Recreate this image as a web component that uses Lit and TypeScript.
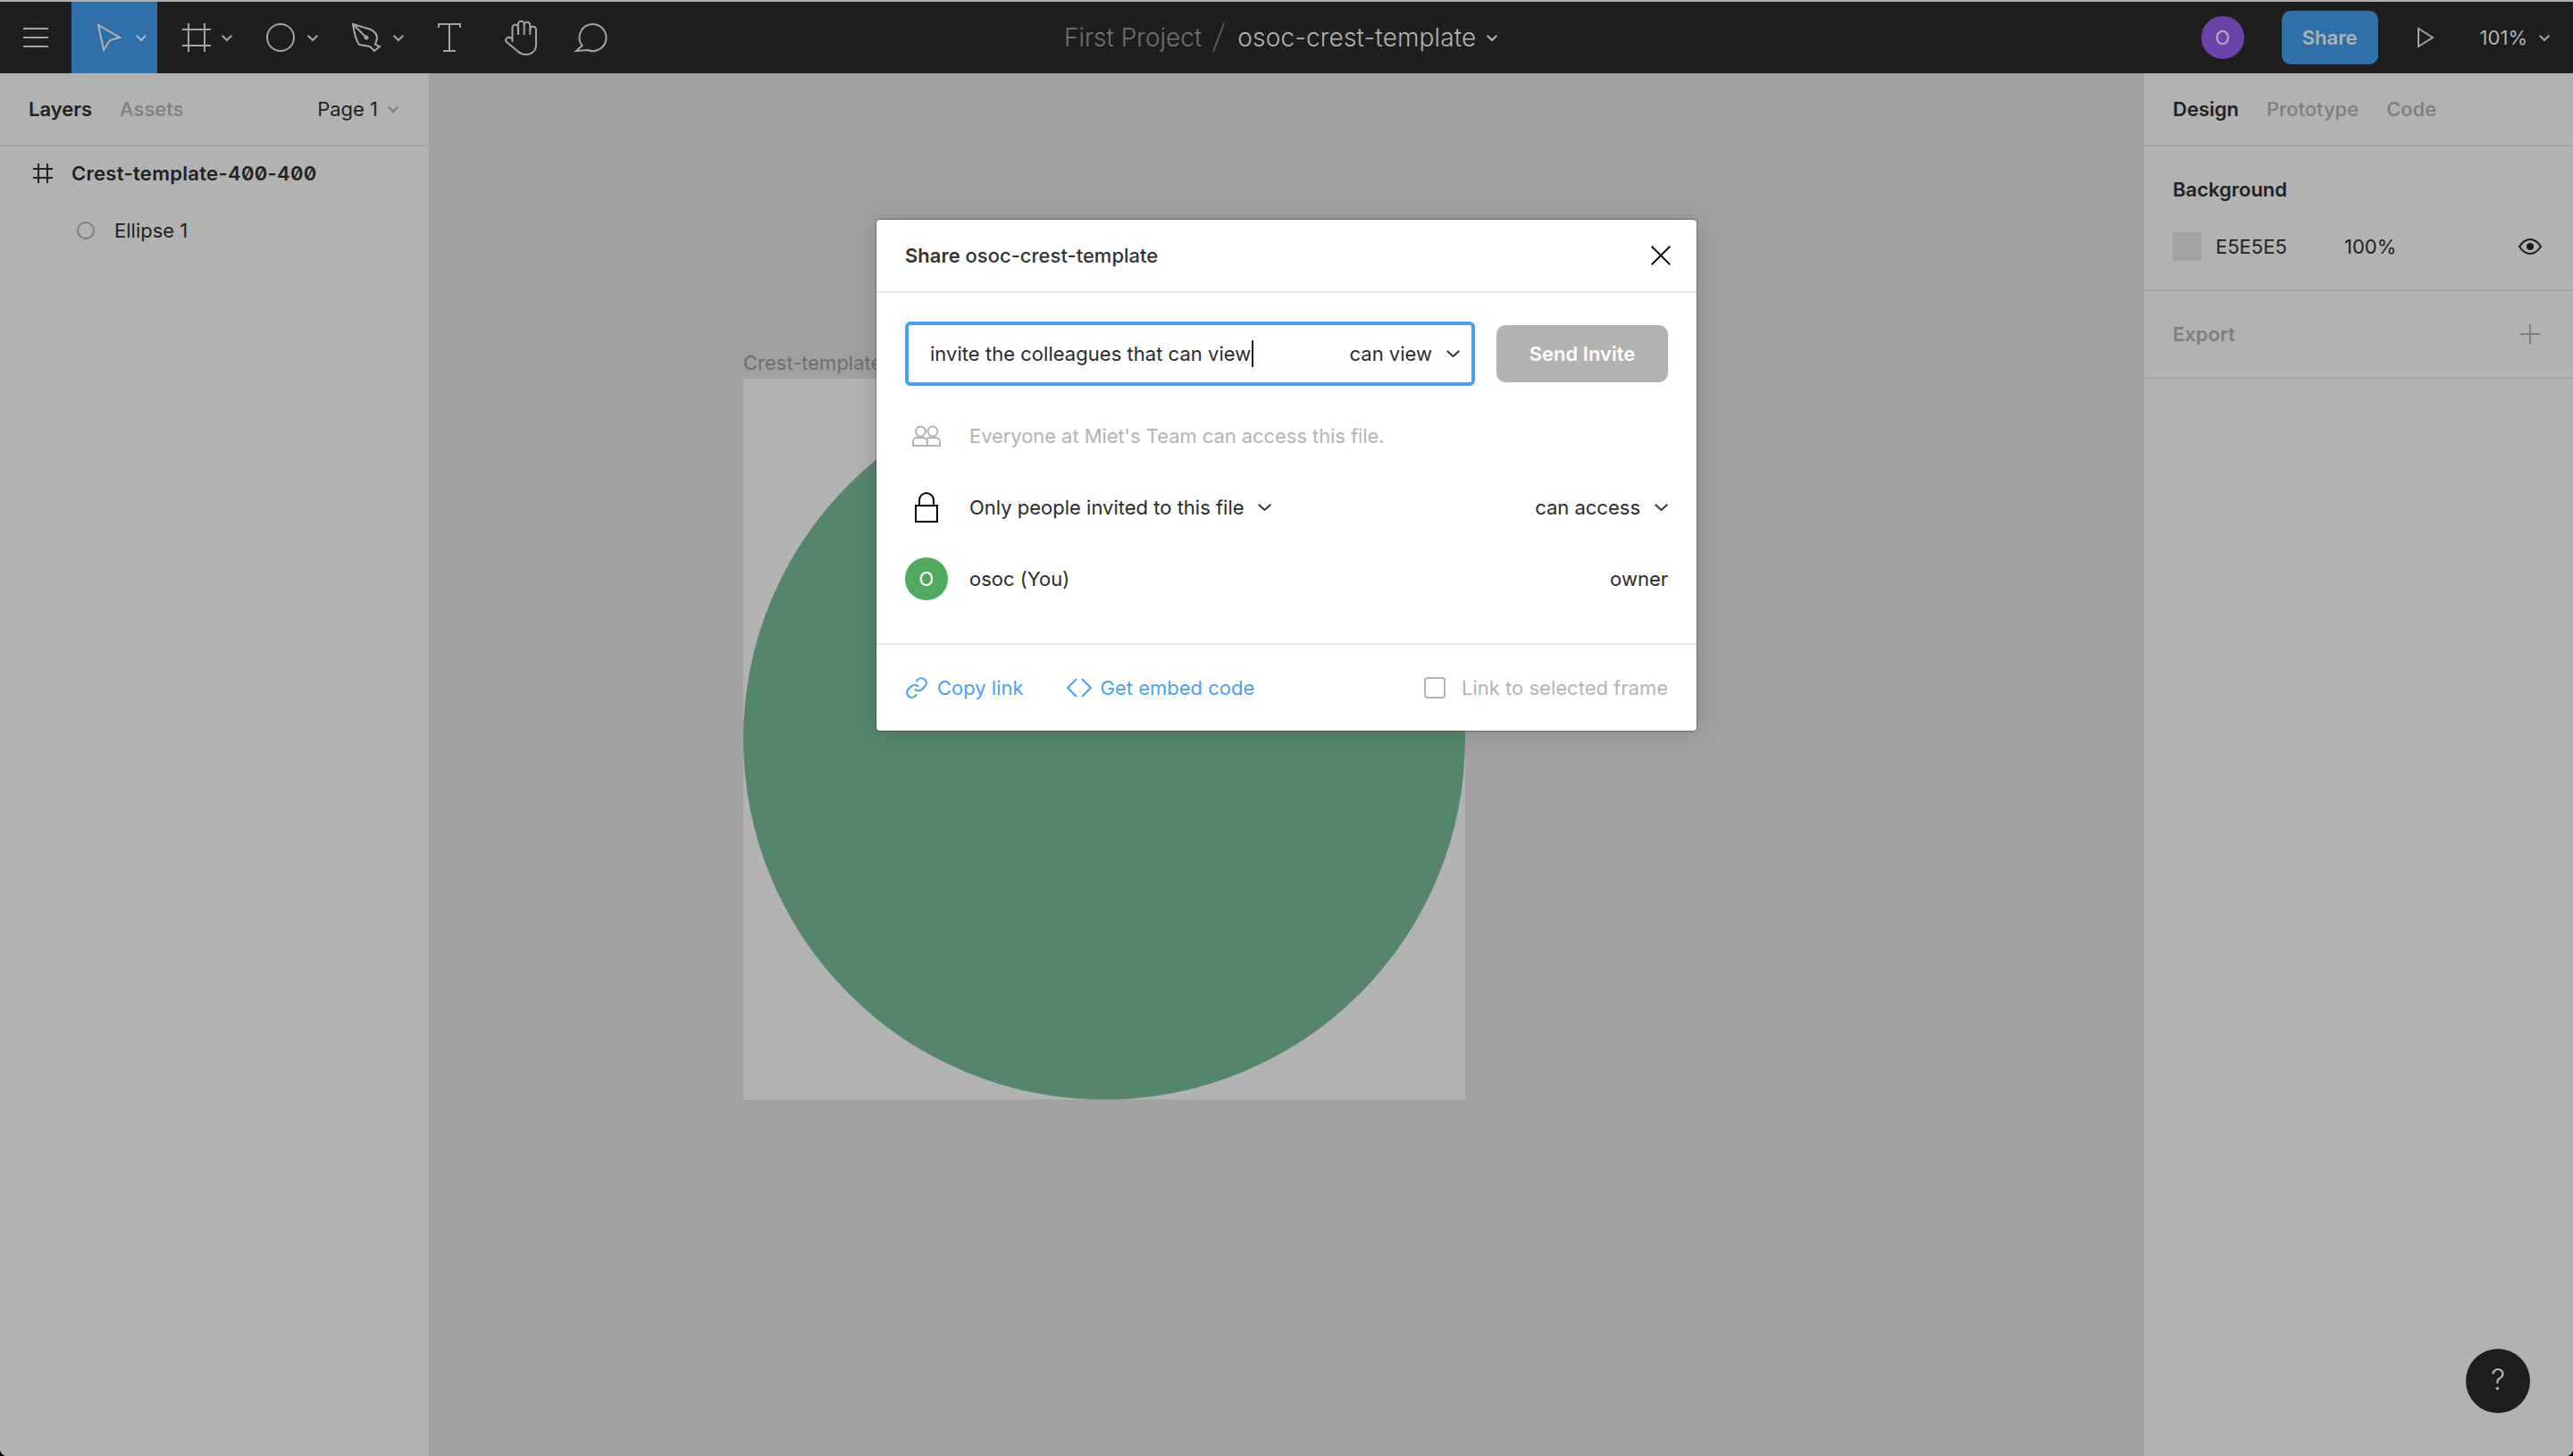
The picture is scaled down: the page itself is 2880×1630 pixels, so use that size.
import { LitElement, html, css, svg } from 'lit';
import { customElement } from 'lit/decorators.js';

const chevron = html`<svg class="chev" width="12" height="7" viewBox="0 0 12 7"><polyline points="0.7,0.7 6,6 11.3,0.7"></polyline></svg>`;
const bigChevron = html`<svg class="chev" width="15" height="8" viewBox="0 0 15 8"><polyline points="0.7,0.7 7.5,7 14.3,0.7"></polyline></svg>`;

const tools = [
  { name: 'select', caret: true, active: true, icon: svg`<path d="M2 2 L26 16 L15 19 L8 30 Z"></path>` },
  { name: 'frame', caret: true, icon: svg`<path d="M7 0 V32 M25 0 V32 M0 7 H32 M0 25 H32"></path>` },
  { name: 'ellipse', caret: true, icon: svg`<circle cx="14" cy="16" r="15"></circle>` },
  { name: 'pen', caret: true, icon: svg`<path d="M-1 1 L19 7 C23 9 26 13 26 17 L24 24 L29 26 L23 31 L18 26 L6 24 C3 20 1 15 -1 1 Z M-1 1 L14 16"></path><circle class="solid" cx="14" cy="16" r="2.5"></circle>` },
  { name: 'text', icon: svg`<path d="M3 5 V1 H27 V5 M15 1 V31 M8 31 H22"></path>` },
  { name: 'hand', icon: svg`<path transform="translate(-4 -4)" d="M9.5 25 V9 a3.3 3.3 0 0 1 6.6 0 V17 M16 17 V5 a3.3 3.3 0 0 1 6.7 0 V17 M22.7 17 V6 a3.3 3.3 0 0 1 6.6 0 V17 M29.3 17 V11 a3.3 3.3 0 0 1 6.7 0 V28 C36 35 31 39 25 39 C21 39 18 38 15 35 L3 25 C1 23 3 19 7 20 L9.5 22"></path>` },
  { name: 'comment', icon: svg`<path d="M3.5 25 A15 15 0 1 1 10 30 L-3 31 Z"></path>` },
];

@customElement('share-dialog')
export class ShareDialog extends LitElement {
  static styles = css`
    :host {
      display: block;
      position: absolute;
      left: 981px;
      top: 246px;
      width: 918px;
      height: 572px;
      background: #fff;
      border-radius: 4px;
      box-shadow: 0 0 0 1px rgba(0, 0, 0, 0.3), 0 2px 28px rgba(0, 0, 0, 0.14);
      color: #2b2b2b;
      font-size: 22px;
      line-height: 26px;
    }

    svg { display: block; fill: none; overflow: visible; }
    .chev { stroke: #333; stroke-width: 2; }

    .head {
      height: 80px;
      border-bottom: 2px solid #e5e5e5;
      display: flex;
      align-items: center;
      justify-content: space-between;
      padding: 0 29px 0 32px;
    }
    .title { font-weight: 500; color: #333; }
    .title b { font-weight: 600; }

    .body { padding: 32px 32px 0; box-sizing: border-box; height: 394px; border-bottom: 2px solid #e5e5e5; }

    .invite { display: flex; gap: 24px; height: 72px; align-items: center; margin-bottom: 16px; }
    .input {
      width: 638px;
      height: 72px;
      box-sizing: border-box;
      border: 4px solid #4aa1f2;
      border-radius: 6px;
      display: flex;
      align-items: center;
      padding: 0 13px 0 24px;
    }
    .typed { flex: 1; display: flex; align-items: center; letter-spacing: 0.03px; }
    .caret { width: 2px; height: 30px; background: #222; margin-left: 1px; }
    .input .chev { margin-left: 16px; }
    .send {
      width: 192px;
      height: 64px;
      border-radius: 10px;
      background: #b2b2b2;
      color: #fff;
      font-weight: 600;
      display: flex;
      align-items: center;
      justify-content: center;
    }

    .row { height: 80px; display: flex; align-items: center; }
    .slot { width: 48px; margin-right: 24px; display: flex; justify-content: center; }
    .muted { color: #b3b3b3; }
    .everyone { letter-spacing: -0.07px; }
    .row .chev { margin-left: 15px; }
    .end { margin-left: auto; display: flex; align-items: center; }
    .row .end .chev { margin-left: 16px; }
    .avatar {
      width: 48px;
      height: 48px;
      border-radius: 50%;
      background: #4fa95f;
      color: #fff;
      display: flex;
      align-items: center;
      justify-content: center;
    }

    .foot { height: 96px; display: flex; align-items: center; padding: 0 32px; color: #4aa1f2; }
    .action { display: flex; align-items: center; margin-right: 48px; }
    .action svg { margin-right: 10px; stroke: #4aa1f2; stroke-width: 2; }
    .link-frame { margin-left: auto; display: flex; align-items: center; color: #b3b3b3; }
    .box { width: 24px; height: 24px; box-sizing: border-box; border: 2px solid #b3b3b3; border-radius: 4px; margin-right: 18px; }
  `;

  render() {
    return html`
      <div class="head">
        <div class="title"><b>Share</b> osoc-crest-template</div>
        <svg width="22" height="22" viewBox="0 0 22 22" stroke="#111" stroke-width="2"><path d="M0.7 0.7 L21.3 21.3 M21.3 0.7 L0.7 21.3"></path></svg>
      </div>
      <div class="body">
        <div class="invite">
          <div class="input">
            <div class="typed">invite the colleagues that can view<span class="caret"></span></div>
            <span>can view</span>${bigChevron}
          </div>
          <div class="send">Send Invite</div>
        </div>
        <div class="row muted">
          <div class="slot">
            <svg width="32" height="24" viewBox="0 0 32 24" stroke="#b3b3b3" stroke-width="2">
              <circle cx="9.5" cy="7" r="5.5"></circle>
              <circle cx="23" cy="7" r="5.5"></circle>
              <path d="M1 23 V19 C1 16 3 14 6 14 H12 C15 14 17 16 17 19 V23 Z M17 15 C18 14 19 14 20 14 H26 C29 14 31 16 31 19 V23 H17"></path>
            </svg>
          </div>
          <span class="everyone">Everyone at Miet's Team can access this file.</span>
        </div>
        <div class="row">
          <div class="slot">
            <svg width="26" height="34" viewBox="0 0 26 34" stroke="#000" stroke-width="2">
              <rect x="1" y="15" width="24" height="18"></rect>
              <path d="M5 15 V9 a8 8 0 0 1 16 0 V15"></path>
            </svg>
          </div>
          <span>Only people invited to this file</span>${bigChevron}
          <div class="end"><span>can access</span>${bigChevron}</div>
        </div>
        <div class="row">
          <div class="slot"><div class="avatar">O</div></div>
          <span>osoc (You)</span>
          <div class="end">owner</div>
        </div>
      </div>
      <div class="foot">
        <div class="action">
          <svg width="26" height="26" viewBox="0 0 24 24">
            <path d="M10 13a5 5 0 0 0 7.54.54l3-3a5 5 0 0 0-7.07-7.07l-1.72 1.71"></path>
            <path d="M14 11a5 5 0 0 0-7.54-.54l-3 3a5 5 0 0 0 7.07 7.07l1.71-1.71"></path>
          </svg>
          <span>Copy link</span>
        </div>
        <div class="action">
          <svg width="28" height="22" viewBox="0 0 28 22"><path d="M11 1 L1 11 L11 21 M17 1 L27 11 L17 21"></path></svg>
          <span>Get embed code</span>
        </div>
        <div class="link-frame"><div class="box"></div><span>Link to selected frame</span></div>
      </div>
    `;
  }
}

@customElement('app-root')
export class AppRoot extends LitElement {
  static styles = css`
    :host {
      display: block;
      position: relative;
      width: 2880px;
      height: 1630px;
      overflow: hidden;
      background: #000;
      font-family: Inter, 'Noto Sans', sans-serif;
      font-size: 22px;
      line-height: 26px;
    }

    svg { display: block; fill: none; overflow: visible; }

    .app {
      width: 100%;
      height: 100%;
      display: flex;
      flex-direction: column;
      border-radius: 0 0 8px 8px;
      overflow: hidden;
      background: #b2b2b2;
    }

    .bar {
      margin-top: 2px;
      height: 80px;
      flex: none;
      background: #1e1e1e;
      display: flex;
      align-items: center;
      color: #b2b2b2;
    }
    .bar svg { stroke: #a3a3a3; stroke-width: 2; }
    .bar .solid { fill: #a3a3a3; stroke: none; }
    .menu { width: 80px; height: 80px; display: flex; align-items: center; justify-content: center; }
    .tool { height: 80px; display: flex; align-items: center; box-sizing: border-box; width: 80px; justify-content: center; }
    .tool.caret { width: 96px; padding-left: 28px; justify-content: flex-start; gap: 12px; }
    .tool.active { background: #3070aa; }
    .tool.active svg { stroke: #b2b2b2; }

    .crumbs { margin-left: 487px; display: flex; align-items: center; font-size: 28px; line-height: 34px; font-weight: 300; }
    .crumbs .project { color: #707070; }
    .crumbs .file { letter-spacing: 0.15px; }
    .crumbs .slash { width: 14px; height: 32px; margin: 0 14px 0 12px; }
    .crumbs .slash svg { stroke: #5a5a5a; }
    .crumbs .chev { margin-left: 12px; }
    .crumbs svg.chev { stroke: #b2b2b2; }

    .right { margin-left: auto; padding-right: 26px; display: flex; align-items: center; }
    .me { width: 48px; height: 48px; border-radius: 50%; background: #6a44ab; display: flex; align-items: center; justify-content: center; }
    .share { width: 108px; height: 60px; margin: 0 44px 0 42px; border-radius: 10px; background: #3070aa; font-weight: 600; display: flex; align-items: center; justify-content: center; }
    .zoom { margin-left: 52px; margin-right: 13px; }

    .main { flex: 1; display: flex; min-height: 0; }
    .panel { width: 480px; flex: none; background: #b2b2b2; color: #222; }
    .tabs { height: 82px; box-sizing: border-box; border-bottom: 2px solid #a3a3a3; display: flex; align-items: center; padding: 0 32px; gap: 31px; font-weight: 600; }
    .tabs .off { color: #7f7f7f; font-weight: 500; }
    .tabs .page { margin-left: auto; font-weight: 400; padding-right: 2px; display: flex; align-items: center; gap: 11px; color: #222; }
    .tabs svg { stroke: #7f7f7f; stroke-width: 2; }
    .layer { height: 60px; display: flex; align-items: center; }
    .layer.frame { padding-left: 37px; font-weight: 600; font-feature-settings: 'zero'; letter-spacing: 0.3px; }
    .layer.frame svg { margin-right: 21px; stroke: #222; stroke-width: 2; }
    .layer.child { margin-top: 4px; padding-left: 86px; }
    .layer.child svg { margin-right: 22px; stroke: #7f7f7f; stroke-width: 2; }

    .canvas { flex: 1; position: relative; background: #a0a0a0; }
    .label { position: absolute; left: 352px; top: 310px; line-height: 28px; color: #6f6f6f; white-space: nowrap; }
    .board { position: absolute; left: 352px; top: 342px; width: 808px; height: 807px; background: #b2b2b2; }
    .disc { width: 100%; height: 100%; border-radius: 50%; background: #55866b; }

    .section { box-sizing: border-box; border-bottom: 2px solid #a3a3a3; padding: 0 32px; }
    .bg { height: 162px; padding-top: 34px; }
    .bg .heading { font-weight: 600; line-height: 28px; }
    .fill { margin-top: 34px; display: flex; align-items: center; height: 32px; }
    .swatch { width: 32px; height: 32px; background: #a3a3a3; margin-right: 16px; }
    .hex { width: 144px; }
    .fill svg { margin-left: auto; margin-right: 3px; stroke: #1c1c1c; stroke-width: 2; }
    .export { height: 98px; display: flex; align-items: center; justify-content: space-between; font-weight: 600; color: #7f7f7f; }
    .export svg { stroke: #7f7f7f; stroke-width: 2; margin-right: 5px; }

    .help {
      position: absolute;
      right: 48px;
      bottom: 48px;
      width: 72px;
      height: 72px;
      box-sizing: border-box;
      padding-bottom: 2px;
      border-radius: 50%;
      background: #1e1e1e;
      color: #b2b2b2;
      font-size: 32px;
      font-weight: 300;
      display: flex;
      align-items: center;
      justify-content: center;
    }
  `;

  render() {
    return html`
      <div class="app">
        <div class="bar">
          <div class="menu">
            <svg width="28" height="22" viewBox="0 0 28 22"><path d="M0 1 H28 M0 11 H28 M0 21 H28"></path></svg>
          </div>
          ${tools.map((t) => html`
            <div class="tool ${t.caret ? 'caret' : ''} ${t.active ? 'active' : ''}">
              <svg width="32" height="32" viewBox="0 0 32 32">${t.icon}</svg>
              ${t.caret ? chevron : ''}
            </div>
          `)}
          <div class="crumbs">
            <span class="project">First Project</span>
            <div class="slash"><svg width="14" height="32" viewBox="0 0 14 32"><path d="M13 0 L1 32"></path></svg></div>
            <span class="file">osoc-crest-template</span>${chevron}
          </div>
          <div class="right">
            <div class="me">O</div>
            <div class="share">Share</div>
            <svg width="18" height="22" viewBox="0 0 18 22"><path d="M1 1 L17 11 L1 21 Z"></path></svg>
            <span class="zoom">101%</span>${chevron}
          </div>
        </div>
        <div class="main">
          <div class="panel">
            <div class="tabs">
              <span>Layers</span><span class="off">Assets</span>
              <span class="page">Page 1 ${chevron}</span>
            </div>
            <div class="layer frame">
              <svg width="22" height="22" viewBox="0 0 22 22"><path d="M6 0 V22 M16 0 V22 M0 6 H22 M0 16 H22"></path></svg>
              <span>Crest-template-400-400</span>
            </div>
            <div class="layer child">
              <svg width="20" height="20" viewBox="0 0 20 20"><circle cx="10" cy="10" r="9"></circle></svg>
              <span>Ellipse 1</span>
            </div>
          </div>
          <div class="canvas">
            <div class="label">Crest-template</div>
            <div class="board"><div class="disc"></div></div>
          </div>
          <div class="panel">
            <div class="tabs">
              <span>Design</span><span class="off">Prototype</span><span class="off">Code</span>
            </div>
            <div class="section bg">
              <div class="heading">Background</div>
              <div class="fill">
                <div class="swatch"></div>
                <span class="hex">E5E5E5</span>
                <span>100%</span>
                <svg width="26" height="18" viewBox="0 0 26 18">
                  <path d="M1 9 C5 3 9 1 13 1 C17 1 21 3 25 9 C21 15 17 17 13 17 C9 17 5 15 1 9 Z"></path>
                  <circle cx="13" cy="9" r="4" fill="#1c1c1c" stroke="none"></circle>
                </svg>
              </div>
            </div>
            <div class="section export">
              <span>Export</span>
              <svg width="22" height="22" viewBox="0 0 22 22"><path d="M11 0 V22 M0 11 H22"></path></svg>
            </div>
          </div>
        </div>
      </div>
      <share-dialog></share-dialog>
      <div class="help">?</div>
    `;
  }
}
